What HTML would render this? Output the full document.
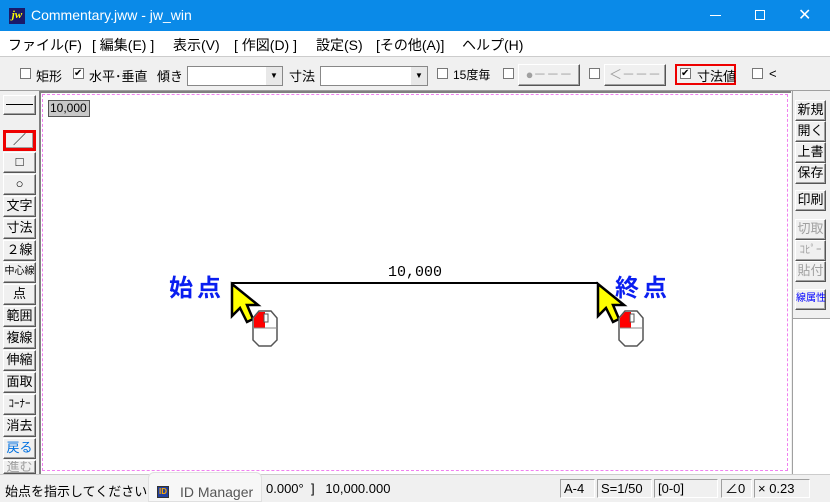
<!DOCTYPE html>
<html><head><meta charset="utf-8">
<style>
*{margin:0;padding:0;box-sizing:border-box}
body{width:830px;height:500px;overflow:hidden;background:#f0f0f0;font-family:"Liberation Sans","Noto Sans CJK JP",sans-serif;font-size:13px;color:#000;position:relative}
.abs{position:absolute}
#title{left:0;top:0;width:830px;height:31px;background:#0a8ae8;color:#fff}
#menu{left:0;top:31px;width:830px;height:26px;background:#fff;border-bottom:1px solid #ccc}
#menu span{position:absolute;top:4px;font-size:14px}
.cb{position:absolute;width:11px;height:11px;border:1px solid #777;background:#fff}
.btn{position:absolute;background:#f0f0f0;border:1px solid;border-color:#fff #555 #555 #fff;box-shadow:inset -1px -1px 0 #a0a0a0;font-size:13px;text-align:center;line-height:18px;white-space:nowrap;overflow:hidden}
.lb{left:3px;width:33px;height:21px}
.rb{left:795px;width:31px;height:21px}
.dis{color:#a0a0a0}
.sf{position:absolute;top:479px;height:19px;border:1px solid;border-color:#a0a0a0 #fff #fff #a0a0a0;font-size:13px;line-height:17px;padding-left:3px}
</style></head><body>
<div id="title" class="abs">
  <div class="abs" style="left:9px;top:8px;width:16px;height:16px;background:#1a1a6a;color:#ff0;font:bold italic 11px 'Liberation Serif',serif;line-height:15px;text-align:center">jw</div>
  <div class="abs" style="left:31px;top:7px;font-size:14px">Commentary.jww - jw_win</div>
  <div class="abs" style="left:710px;top:15px;width:11px;height:1px;background:#fff"></div>
  <div class="abs" style="left:755px;top:10px;width:10px;height:10px;border:1px solid #fff"></div>
  <div class="abs" style="left:798px;top:5px;font-size:16px;color:#fff">✕</div>
</div>
<div id="menu" class="abs">
  <span style="left:8px">ファイル(F)</span>
  <span style="left:92px">[ 編集(E) ]</span>
  <span style="left:173px">表示(V)</span>
  <span style="left:234px">[ 作図(D) ]</span>
  <span style="left:316px">設定(S)</span>
  <span style="left:376px">[その他(A)]</span>
  <span style="left:462px">ヘルプ(H)</span>
</div>
<div class="cb" style="left:20px;top:68px"></div><div class="abs" style="left:36px;top:66px;font-size:13px">矩形</div>
<div class="cb" style="left:73px;top:68px;font-size:10px;line-height:9px">✔</div><div class="abs" style="left:89px;top:66px;font-size:13px">水平･垂直</div>
<div class="abs" style="left:157px;top:66px;font-size:13px">傾き</div>
<div class="abs" style="left:187px;top:66px;width:96px;height:20px;background:#fff;border:1px solid #888"><div class="abs" style="right:0;top:0;width:16px;height:18px;background:#e8e8e8;font-size:8px;text-align:center;line-height:18px">▼</div></div>
<div class="abs" style="left:289px;top:66px;font-size:13px">寸法</div>
<div class="abs" style="left:320px;top:66px;width:108px;height:20px;background:#fff;border:1px solid #888"><div class="abs" style="right:0;top:0;width:16px;height:18px;background:#e8e8e8;font-size:8px;text-align:center;line-height:18px">▼</div></div>
<div class="cb" style="left:437px;top:68px"></div><div class="abs" style="left:453px;top:66px;font-size:12px">15度毎</div>
<div class="cb" style="left:503px;top:68px"></div>
<div class="btn dis" style="left:518px;top:64px;width:62px;height:22px;line-height:19px">●－－－</div>
<div class="cb" style="left:589px;top:68px"></div>
<div class="btn dis" style="left:604px;top:64px;width:62px;height:22px;line-height:19px">＜－－－</div>
<div class="abs" style="left:675px;top:64px;width:61px;height:21px;border:2px solid #e00"></div>
<div class="cb" style="left:680px;top:68px;font-size:10px;line-height:9px">✔</div><div class="abs" style="left:697px;top:66px;font-size:13px">寸法値</div>
<div class="cb" style="left:752px;top:68px"></div><div class="abs" style="left:769px;top:66px;font-size:13px">&lt;</div>
<div class="abs" style="left:0;top:90px;width:830px;height:1px;background:#a0a0a0"></div>
<div class="abs" style="left:39px;top:91px;width:752px;height:383px;background:#fff;border-left:2px solid #808080;border-top:2px solid #808080"></div>
<div class="abs" style="left:42px;top:94px;width:746px;height:377px;border:1px dashed #f080f0"></div>
<div class="abs" style="left:48px;top:100px;width:42px;height:17px;background:#c8c8c8;border:1px solid #555;font-size:12px;line-height:15px;padding-left:1px">10,000</div>
<div class="abs" style="left:792px;top:91px;width:38px;height:383px;background:#fff;border-left:1px solid #a0a0a0"></div>
<div class="abs" style="left:792px;top:91px;width:38px;height:228px;background:#f0f0f0;border-left:1px solid #a0a0a0;border-bottom:1px solid #a0a0a0"></div>
<div class="abs" style="left:232px;top:282px;width:366px;height:2px;background:#000"></div>
<div class="abs" style="left:388px;top:264px;font:15px 'Liberation Mono',monospace">10,000</div>
<div class="abs" style="left:169px;top:268px;font-size:24px;font-weight:bold;color:#0a1ef0;letter-spacing:4px">始点</div>
<div class="abs" style="left:615px;top:268px;font-size:24px;font-weight:bold;color:#0a1ef0;letter-spacing:4px">終点</div>
<svg class="abs" style="left:0;top:0" width="830" height="500">
 <g id="cur">
  <polygon points="232,284 232,316 240,308 247,322 253,319 247,305 258,305" fill="#ff0" stroke="#000" stroke-width="2.5" stroke-linejoin="miter"/>
  <path d="M259,311 L271,311 L277,318 L277,340 L271,346 L259,346 L253,340 L253,318 Z" fill="#fff" stroke="#555" stroke-width="1.5"/>
  <path d="M254,318 L259,312 L265,312 L265,328 L254,328 Z" fill="#f00"/>
  <line x1="253" y1="328" x2="277" y2="328" stroke="#888"/>
  <rect x="264" y="314" width="4" height="8" fill="#fff" stroke="#555"/>
 </g>
 <use href="#cur" x="366" y="0"/>
</svg>
<div class="btn" style="left:3px;top:95px;width:33px;height:20px"><div class="abs" style="left:2px;top:8px;width:27px;height:1px;background:#000"></div></div>
<div class="btn lb" style="top:130px;border:3px solid #e00;line-height:14px">／</div>
<div class="btn lb" style="top:152px">□</div>
<div class="btn lb" style="top:174px">○</div>
<div class="btn lb" style="top:196px">文字</div>
<div class="btn lb" style="top:218px">寸法</div>
<div class="btn lb" style="top:240px">２線</div>
<div class="btn lb" style="top:262px;font-size:10px">中心線</div>
<div class="btn lb" style="top:284px">点</div>
<div class="btn lb" style="top:306px">範囲</div>
<div class="btn lb" style="top:328px">複線</div>
<div class="btn lb" style="top:350px">伸縮</div>
<div class="btn lb" style="top:372px">面取</div>
<div class="btn lb" style="top:394px;font-size:11px">ｺｰﾅｰ</div>
<div class="btn lb" style="top:416px">消去</div>
<div class="btn lb" style="top:438px;color:#0070e0">戻る</div>
<div class="btn lb dis" style="top:460px;height:14px;line-height:12px">進む</div>
<div class="btn rb" style="top:100px">新規</div>
<div class="btn rb" style="top:121px">開く</div>
<div class="btn rb" style="top:142px">上書</div>
<div class="btn rb" style="top:163px">保存</div>
<div class="btn rb" style="top:190px">印刷</div>
<div class="btn rb dis" style="top:219px">切取</div>
<div class="btn rb dis" style="top:240px;font-size:11px">ｺﾋﾟｰ</div>
<div class="btn rb dis" style="top:261px">貼付</div>
<div class="btn rb" style="top:289px;color:#00f;font-size:10px">線属性</div>
<div class="abs" style="left:0;top:474px;width:830px;height:26px;background:#f0f0f0;border-top:1px solid #ccc"></div>
<div class="abs" style="left:5px;top:481px;font-size:13px">始点を指示してください</div>
<div class="abs" style="left:148px;top:472px;width:114px;height:30px;background:#f7f7f7;border:1px solid #e0e0e0;border-radius:6px 6px 0 0"></div>
<div class="abs" style="left:157px;top:486px;width:12px;height:12px;background:#2040a0;border:1px solid #333;color:#fa0;font-size:8px;line-height:10px;text-align:center;font-weight:bold">ID</div>
<div class="abs" style="left:180px;top:484px;font-size:14px;color:#555">ID Manager</div>
<div class="abs" style="left:266px;top:481px;font-size:13px">0.000°&nbsp;&nbsp;]&nbsp;&nbsp;&nbsp;10,000.000</div>
<div class="sf" style="left:560px;width:35px">A-4</div>
<div class="sf" style="left:597px;width:55px">S=1/50</div>
<div class="sf" style="left:654px;width:64px">[0-0]</div>
<div class="sf" style="left:721px;width:31px">∠0</div>
<div class="sf" style="left:754px;width:56px">× 0.23</div>
</body></html>
